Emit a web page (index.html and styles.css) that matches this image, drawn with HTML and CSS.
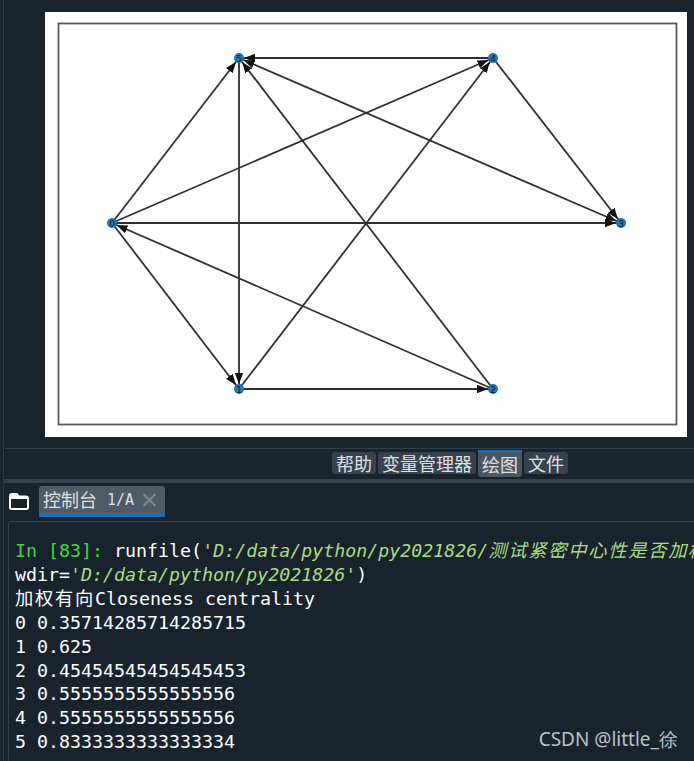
FILE: index.html
```html
<!DOCTYPE html>
<html lang="zh">
<head>
<meta charset="utf-8">
<title>Spyder</title>
<link rel="stylesheet" href="styles.css">
</head>
<body>
<div class="app">
  <div class="plot-pane">
    <div class="figure">
      <svg class="graph" width="642" height="425" viewBox="45 12 642 425" xmlns="http://www.w3.org/2000/svg">
        <defs>
          <marker id="ah" markerUnits="userSpaceOnUse" markerWidth="22" markerHeight="14" viewBox="0 -7 22 14" refX="16" refY="0" orient="auto">
            <path d="M0,-4.2 L11,0 L0,4.2 z" fill="#111"/>
          </marker>
          <marker id="ahs" markerUnits="userSpaceOnUse" markerWidth="22" markerHeight="14" viewBox="0 -7 22 14" refX="16" refY="0" orient="auto-start-reverse">
            <path d="M0,-4.2 L11,0 L0,4.2 z" fill="#111"/>
          </marker>
        </defs>
        <rect class="frame" x="58.5" y="23.5" width="618" height="401"/>
        <g class="edges">
          <line x1="493" y1="58" x2="239" y2="58" marker-end="url(#ah)"/>
          <line x1="112" y1="223" x2="239" y2="58" marker-end="url(#ah)"/>
          <line x1="112" y1="223" x2="493" y2="58" marker-end="url(#ah)"/>
          <line x1="112" y1="223" x2="621" y2="223" marker-end="url(#ah)"/>
          <line x1="493" y1="389" x2="112" y2="223" marker-end="url(#ah)"/>
          <line x1="112" y1="223" x2="239" y2="389" marker-end="url(#ah)"/>
          <line x1="239" y1="58" x2="239" y2="389" marker-end="url(#ah)"/>
          <line x1="239" y1="389" x2="493" y2="58" marker-end="url(#ah)"/>
          <line x1="239" y1="389" x2="493" y2="389" marker-end="url(#ah)"/>
          <line x1="493" y1="389" x2="239" y2="58" marker-end="url(#ah)"/>
          <line x1="621" y1="223" x2="239" y2="58" marker-start="url(#ahs)" marker-end="url(#ah)"/>
          <line x1="493" y1="58" x2="621" y2="223" marker-end="url(#ah)"/>
        </g>
        <g class="nodes">
          <circle cx="112" cy="223" r="5"/>
          <circle cx="239" cy="389" r="5"/>
          <circle cx="493" cy="389" r="5"/>
          <circle cx="621" cy="223" r="5"/>
          <circle cx="493" cy="58" r="5"/>
          <circle cx="239" cy="58" r="5"/>
        </g>
        <g class="labels">
          <text x="112" y="226.5">0</text>
          <text x="239" y="392.5">1</text>
          <text x="493" y="392.5">2</text>
          <text x="621" y="226.5">3</text>
          <text x="493" y="61.5">4</text>
          <text x="239" y="61.5">5</text>
        </g>
      </svg>
    </div>
  </div>

  <div class="pane-tabs">
    <div class="ptab">帮助</div>
    <div class="ptab">变量管理器</div>
    <div class="ptab active">绘图</div>
    <div class="ptab">文件</div>
  </div>

  <div class="sep-bar"></div>

  <div class="console-tabbar">
    <svg class="undock" width="20" height="17" viewBox="0 0 20 17" xmlns="http://www.w3.org/2000/svg">
      <path d="M1,3 Q1,1 3,1 L8,1 L9.5,3.5 L17,3.5 Q19,3.5 19,5.5 L19,14.5 Q19,16 17.5,16 L2.5,16 Q1,16 1,14.5 Z" fill="none" stroke="#ffffff" stroke-width="2"/>
      <rect x="1" y="2" width="8" height="3.5" fill="#ffffff"/>
      <rect x="1" y="3.5" width="18" height="2.5" fill="#ffffff"/>
    </svg>
    <div class="ctab">
      <span class="ctab-cjk">控制台</span><span class="ctab-id">1/A</span>
      <svg class="close" width="15" height="14" viewBox="0 0 15 14" xmlns="http://www.w3.org/2000/svg">
        <path d="M1.5,1 L13.5,13 M13.5,1 L1.5,13" stroke="#7d8791" stroke-width="2" fill="none"/>
      </svg>
    </div>
  </div>

  <div class="console-pane">
<pre class="console"><span class="prompt">In [83]:</span> runfile(<span class="str">'D:/data/python/py2021826/<span class="cjk">测试紧密中心性是否加权有向</span>.py'</span>,
wdir=<span class="str">'D:/data/python/py2021826'</span>)
<span class="cjk">加权有向</span>Closeness centrality
0 0.35714285714285715
1 0.625
2 0.45454545454545453
3 0.5555555555555556
4 0.5555555555555556
5 0.8333333333333334</pre>
  </div>

  <div class="watermark">CSDN @little_徐</div>
</div>
</body>
</html>
```

FILE: styles.css
```css
html, body {
  margin: 0;
  padding: 0;
  background: #19232d;
  overflow: hidden;
}

.app {
  position: relative;
  margin-left: 3px;
  border-left: 1px solid #2c3843;
  width: 690px;
  height: 761px;
  overflow: hidden;
}

/* ---- plot pane ---- */
.plot-pane {
  height: 436px;
  border-bottom: 1px solid #32414b;
  border-bottom-left-radius: 3px;
  padding: 12px 0 0 41px;
}

.figure {
  width: 642px;
  height: 425px;
  background: #ffffff;
}

.graph {
  display: block;
}

.frame {
  fill: none;
  stroke: #5a5a5a;
  stroke-width: 1.8;
}

.edges line {
  stroke: #303030;
  stroke-width: 1.8;
}

.nodes circle {
  fill: #1f77b4;
}

.labels text {
  font-family: "DejaVu Sans", sans-serif;
  font-size: 9px;
  fill: #0d1a26;
  text-anchor: middle;
}

/* ---- plugin tabs ---- */
.pane-tabs {
  height: 30px;
  box-sizing: border-box;
  padding: 3px 0 0 328px;
  display: flex;
  align-items: flex-start;
  gap: 2px;
}

.ptab {
  height: 22px;
  line-height: 22px;
  padding: 0 4px;
  background: #37414f;
  border-radius: 3px;
  color: #e0e1e3;
  font-family: "Noto Sans CJK SC", sans-serif;
  font-size: 18px;
}

.ptab.active {
  margin-top: -2px;
  height: 25px;
  line-height: 25px;
  border-top: 2px solid #1a72bb;
  border-radius: 0 0 3px 3px;
  background: #4b5663;
}

.sep-bar {
  height: 4px;
  background: #32414b;
}

/* ---- console tab bar ---- */
.console-tabbar {
  height: 38px;
  display: flex;
  align-items: flex-start;
  padding-left: 5px;
  gap: 10px;
}

.undock {
  margin-top: 10px;
  display: block;
}

.ctab {
  margin-top: 3px;
  width: 126px;
  height: 31px;
  box-sizing: border-box;
  border-bottom: 4px solid #1a6eb5;
  border-radius: 3px 3px 0 0;
  background: #4f5b67;
  display: flex;
  align-items: center;
  padding-left: 4px;
  color: #e0e1e3;
}

.ctab-cjk {
  font-family: "Noto Sans CJK SC", sans-serif;
  font-size: 18px;
  line-height: 27px;
}

.ctab-id {
  font-family: "DejaVu Sans Mono", monospace;
  font-size: 15px;
  margin-left: 10px;
}

.close {
  margin-left: 8px;
  display: block;
}

/* ---- console ---- */
.console-pane {
  margin-left: 4px;
  border-top: 1px solid #32414b;
  border-left: 1px solid #32414b;
  border-top-left-radius: 4px;
  height: 300px;
  padding: 16px 0 0 6px;
}

.console {
  margin: 0;
  font-family: "DejaVu Sans Mono", "Noto Sans CJK SC", monospace;
  font-size: 18.3px;
  line-height: 23.7px;
  color: #ffffff;
  white-space: pre;
  overflow: hidden;
}

.console .cjk {
  font-family: "Noto Sans CJK SC", sans-serif;
  letter-spacing: 1.7px;
}

.prompt {
  color: #3fd83f;
}

.str {
  color: #aadd80;
  font-style: italic;
}

.watermark {
  position: absolute;
  right: 16px;
  top: 729px;
  font-family: "Noto Sans", sans-serif;
  font-size: 19px;
  line-height: 20px;
  color: #bcc1c6;
  white-space: nowrap;
}
```
